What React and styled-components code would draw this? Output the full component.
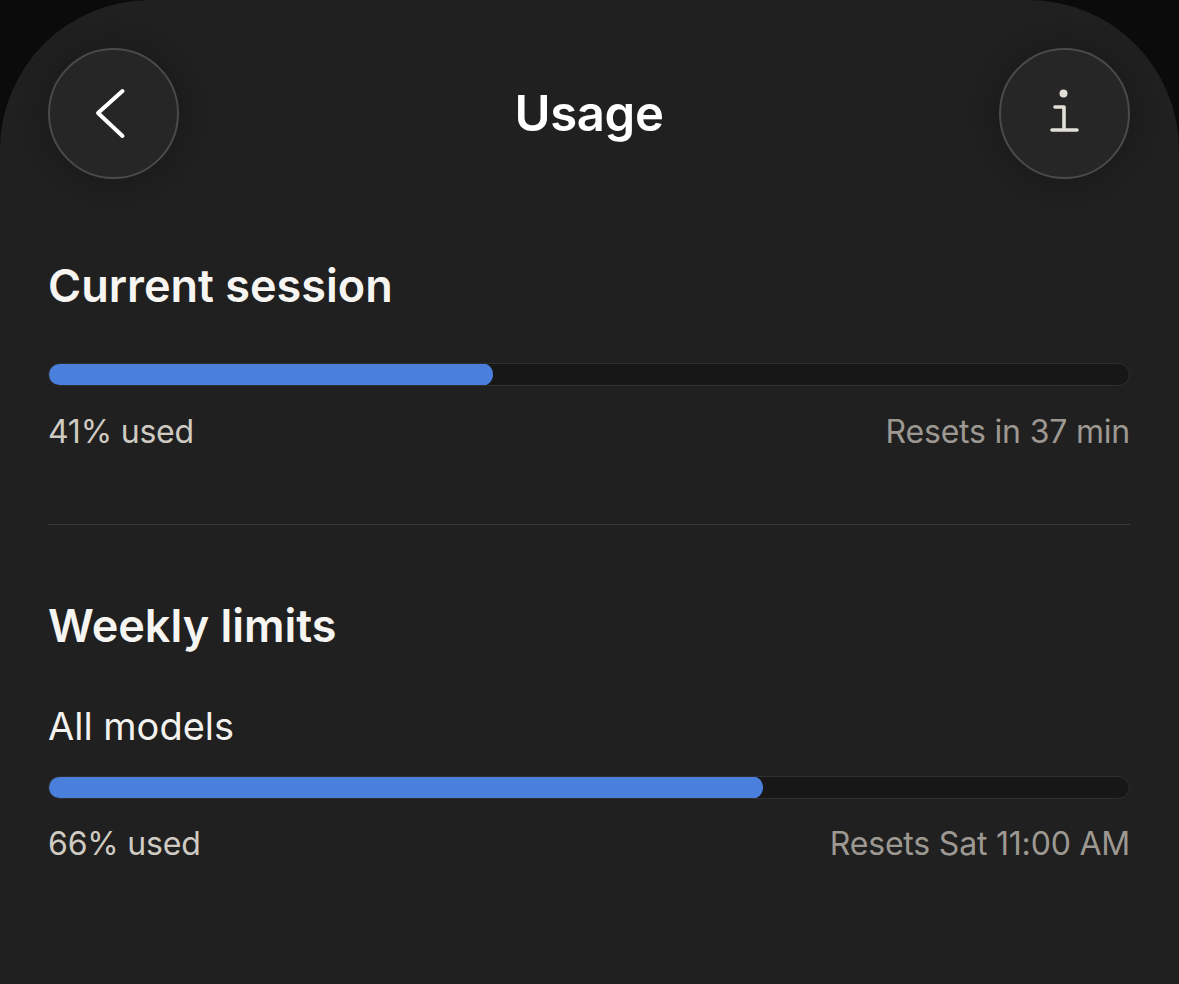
import React from "react";
import styled, { createGlobalStyle } from "styled-components";

const Global = createGlobalStyle`
  html, body { margin: 0; padding: 0; background: #0b0b0b; }
  body { font-family: Inter, "Noto Sans", sans-serif; -webkit-font-smoothing: antialiased; }
`;

const Panel = styled.div`
  box-sizing: border-box;
  min-height: 984px;
  background: #202020;
  border-radius: 150px 150px 0 0;
  padding: 48px 49px 0 48px;
`;

const Header = styled.header`
  display: grid;
  grid-template-columns: 131px 1fr 131px;
  align-items: center;
  height: 131px;
`;

const RoundButton = styled.button`
  width: 131px;
  height: 131px;
  border-radius: 50%;
  box-sizing: border-box;
  border: 2px solid #4a4a4a;
  background: #262626;
  display: flex;
  align-items: center;
  justify-content: center;
  padding: 0;
  box-shadow: 0 0 24px 8px rgba(0, 0, 0, 0.18);
  cursor: pointer;
`;

const Title = styled.h1`
  margin: 0;
  text-align: center;
  color: #ffffff;
  font-size: 49px;
  font-weight: 600;
  line-height: 1;
  letter-spacing: -0.3px;
`;

const SectionTitle = styled.h2`
  margin: ${(p) => p.$top}px 0 0;
  color: #f6f5f2;
  font-size: 45px;
  font-weight: 600;
  line-height: 1;
  letter-spacing: 0;
`;

const SubTitle = styled.div`
  margin-top: ${(p) => p.$top}px;
  color: #f3f2ef;
  font-size: 38px;
  font-weight: 400;
  line-height: 1;
  letter-spacing: 0;
`;

const Track = styled.div`
  margin-top: ${(p) => p.$top}px;
  height: 23px;
  box-sizing: border-box;
  border-radius: 12px;
  background: #171717;
  border: 1px solid #2f2f2f;
  overflow: hidden;
  position: relative;
`;

const Fill = styled.div`
  position: absolute;
  left: -1px;
  top: -1px;
  bottom: -1px;
  background: #4a80dc;
  border-radius: 12px;
`;

const Meta = styled.div`
  margin-top: ${(p) => p.$top}px;
  display: flex;
  justify-content: space-between;
  font-size: 32px;
  line-height: 1;
  letter-spacing: -0.2px;
`;

const Used = styled.span`
  color: #cfcbc3;
`;

const Resets = styled.span`
  color: #9d9992;
`;

const Divider = styled.hr`
  margin: 76px 0 0;
  border: 0;
  height: 1px;
  background: #3a3a3e;
`;

function UsageBar({ pct, top }) {
  return (
    <Track $top={top}>
      <Fill style={{ width: `calc(${pct}% + 2px)` }} />
    </Track>
  );
}

export default function App() {
  return (
    <>
      <Global />
      <Panel>
        <Header>
          <RoundButton aria-label="Back">
            <svg width="40" height="56" viewBox="0 0 40 56" fill="none">
              <path d="M28.5 5 L4 27 L28.5 50" stroke="#ffffff" strokeWidth="4" strokeLinecap="round" strokeLinejoin="round" />
            </svg>
          </RoundButton>
          <Title>Usage</Title>
          <RoundButton aria-label="Info">
            <svg width="40" height="56" viewBox="0 0 40 56" fill="none">
              <circle cx="18.5" cy="7.5" r="4" fill="#e2dfd7" />
              <path d="M10 21 H19 V43 M7 44 H32" stroke="#e2dfd7" strokeWidth="3.6" strokeLinecap="round" strokeLinejoin="round" />
            </svg>
          </RoundButton>
        </Header>

        <SectionTitle $top={84}>Current session</SectionTitle>
        <UsageBar pct={41} top={55} />
        <Meta $top={30}>
          <Used>41% used</Used>
          <Resets>Resets in 37 min</Resets>
        </Meta>

        <Divider />

        <SectionTitle $top={78}>Weekly limits</SectionTitle>
        <SubTitle $top={59}>All models</SubTitle>
        <UsageBar pct={66} top={31} />
        <Meta $top={29}>
          <Used>66% used</Used>
          <Resets>Resets Sat 11:00 AM</Resets>
        </Meta>
      </Panel>
    </>
  );
}
